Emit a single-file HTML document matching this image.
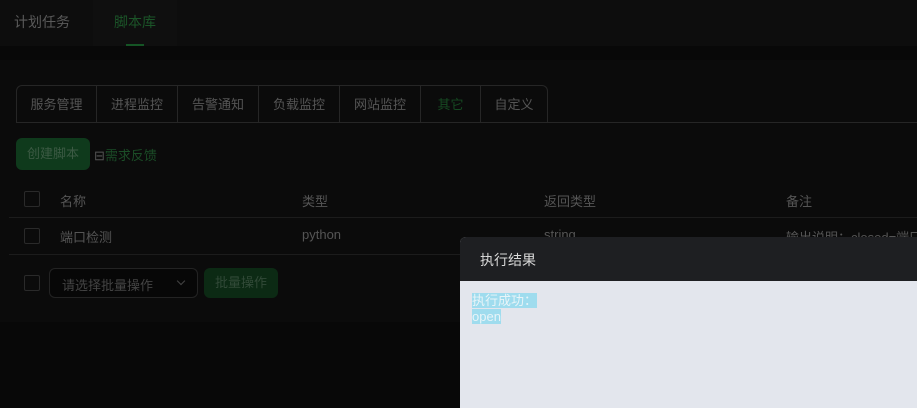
<!DOCTYPE html>
<html><head><meta charset="utf-8"><style>
*{margin:0;padding:0;box-sizing:border-box}
body{width:917px;height:408px;overflow:hidden;background:#080808;font-family:"Liberation Sans","Noto Sans CJK SC",sans-serif;font-size:13px;color:#555;position:relative}
.top{position:absolute;left:0;top:0;width:917px;height:46px;background:#0d0d0d}
.t1{position:absolute;left:14px;top:12px;font-size:14px;color:#5a5a5a}
.t2{position:absolute;left:93px;top:0;width:84px;height:46px;background:#0f0f0f}
.t2 span{position:absolute;left:21px;top:12px;font-size:14px;color:#1b5428}
.t2 i{position:absolute;left:33px;top:44px;width:18px;height:2px;background:#155525}
.panel{position:absolute;left:0;top:60px;width:917px;height:262px;background:#0b0b0b}
.tabs{position:absolute;left:16px;top:85px;height:38px;display:flex;border:1px solid #262626;border-bottom:none;border-radius:6px 6px 0 0}
.tabs div{height:37px;line-height:37px;text-align:center;border-right:1px solid #262626;color:#555}
.tabs div:last-child{border-right:none}
.line{position:absolute;left:16px;top:122px;width:901px;height:1px;background:#262626}
.btn{position:absolute;left:16px;top:138px;width:74px;height:32px;background:#0f3a1c;border-radius:6px;color:#3c5a44;line-height:32px;text-align:center}
.fb{position:absolute;left:94px;top:145px;color:#1b4d27}
.fb b{font-weight:normal;color:#555}
.cb{position:absolute;width:16px;height:16px;border:1px solid #2a2a2a;border-radius:2px}
.th,.td{position:absolute;color:#555}
.hl{position:absolute;left:9px;width:908px;height:1px;background:#1c1c1c}
.sel{position:absolute;left:49px;top:268px;width:149px;height:30px;border:1px solid #232323;border-radius:6px;background:#070707;color:#444;padding:6px 0 0 12px}
.sel i{position:absolute;right:13px;top:9px;width:6px;height:6px;border-right:1px solid #444;border-bottom:1px solid #444;transform:rotate(45deg)}
.btn2{position:absolute;left:204px;top:268px;width:74px;height:30px;background:#0c2a14;border-radius:6px;color:#324a38;line-height:30px;text-align:center}
.dlg{position:absolute;left:460px;top:237px;width:457px;height:171px;background:#e3e6ed;border-radius:6px 0 0 0;overflow:hidden}
.dh{height:44px;background:#1e1f22;color:#d8d8d8;font-size:14px;padding:13px 0 0 20px}
.out{position:absolute;left:12px;top:56px;font-size:13px;line-height:16px;color:#e8f4f8}
.out span{background:#9fdcee}
</style></head><body>
<div class="top"><div class="t1">计划任务</div><div class="t2"><span>脚本库</span><i></i></div></div>
<div class="panel"></div>
<div class="tabs">
<div style="width:80px">服务管理</div><div style="width:81px">进程监控</div><div style="width:81px">告警通知</div><div style="width:81px">负载监控</div><div style="width:81px">网站监控</div><div style="width:60px;color:#164a22">其它</div><div style="width:66px">自定义</div>
</div>
<div class="line"></div>
<div class="btn">创建脚本</div>
<div class="fb"><b>⊟</b>需求反馈</div>
<div class="cb" style="left:24px;top:191px"></div>
<div class="th" style="left:60px;top:191px">名称</div>
<div class="th" style="left:302px;top:191px">类型</div>
<div class="th" style="left:544px;top:191px">返回类型</div>
<div class="th" style="left:786px;top:191px">备注</div>
<div class="hl" style="top:217px"></div>
<div class="cb" style="left:24px;top:228px"></div>
<div class="td" style="left:60px;top:227px">端口检测</div>
<div class="td" style="left:302px;top:227px">python</div>
<div class="td" style="left:544px;top:227px">string</div>
<div class="td" style="left:786px;top:227px;white-space:nowrap">输出说明：closed=端口</div>
<div class="hl" style="top:254px"></div>
<div class="cb" style="left:24px;top:275px"></div>
<div class="sel">请选择批量操作<i></i></div>
<div class="btn2">批量操作</div>
<div class="dlg"><div class="dh">执行结果</div>
<div class="out"><span>执行成功：</span><br><span>open</span></div></div>
</body></html>
